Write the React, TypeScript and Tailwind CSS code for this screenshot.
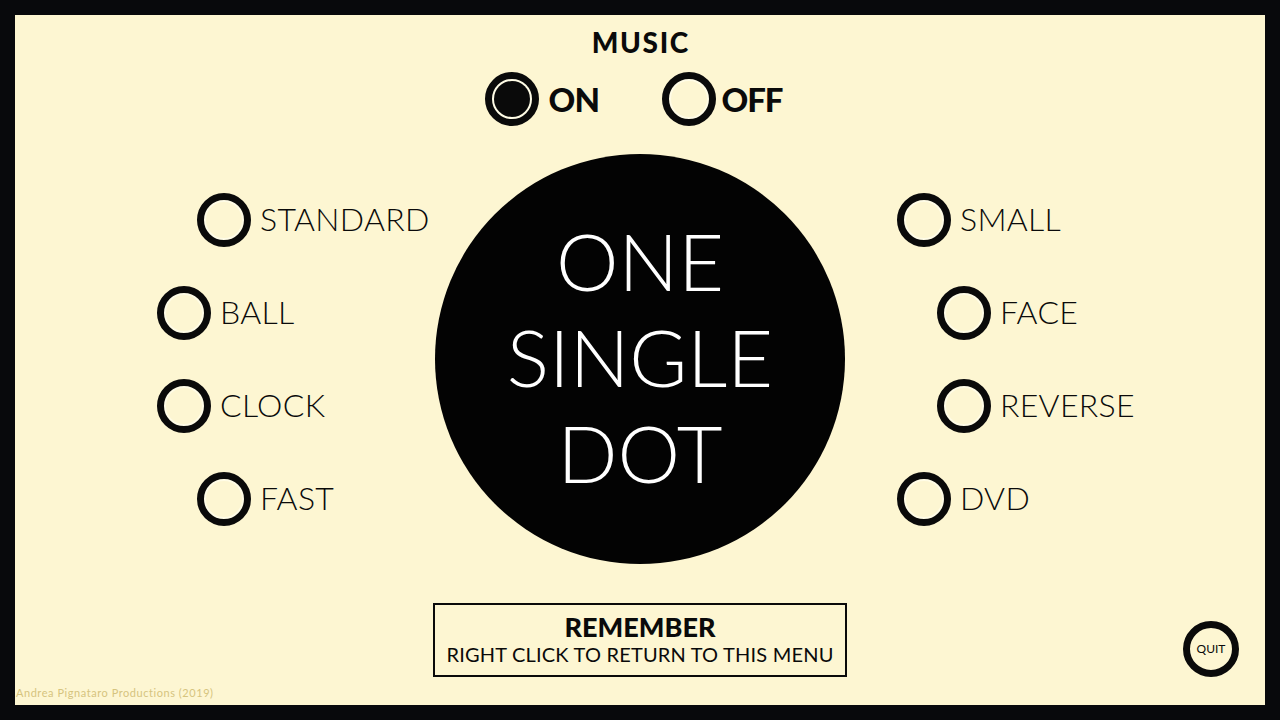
import React from "react";

const font = { fontFamily: "Lato, 'Noto Sans', sans-serif" };

function Ring({ selected = false }: { selected?: boolean }) {
  return (
    <div className="w-[54px] h-[54px] shrink-0 rounded-full border-[7px] border-[#0a0a0a] p-[2px] bg-[#fffce6]">
      {selected ? (
        <div className="w-full h-full rounded-full bg-[#0a0a0a]" />
      ) : (
        <div className="w-full h-full rounded-full bg-[#fdf6d2]" />
      )}
    </div>
  );
}

function Option({ label, indent }: { label: string; indent: string }) {
  return (
    <div className={`flex items-center gap-[9px] h-[54px] ${indent}`}>
      <Ring />
      <span className="text-[32px] leading-none text-[#0a0a0a] font-light tracking-[0.01em] -mt-[2px]">{label}</span>
    </div>
  );
}

export default function App() {
  return (
    <div className="w-[1280px] h-[720px] bg-[#08090c] p-[15px]" style={font}>
      <div className="w-full h-full bg-[#fdf6d2] flex flex-col">
        {/* MUSIC */}
        <div className="flex justify-center pt-[13px]">
          <span className="text-[28px] leading-[28px] font-black tracking-[0.06em] pl-[0.06em] text-[#0a0a0a]">MUSIC</span>
        </div>
        <div className="flex justify-center items-center mt-[16px] h-[54px] pr-[12px]">
          <div className="flex items-center gap-[9px]">
            <Ring selected />
            <span className="text-[33px] leading-none font-black tracking-[-0.02em] text-[#0a0a0a]">ON</span>
          </div>
          <div className="flex items-center gap-[5px] ml-[63px]">
            <Ring />
            <span className="text-[33px] leading-none font-black tracking-[-0.03em] text-[#0a0a0a]">OFF</span>
          </div>
        </div>

        {/* middle */}
        <div className="grid grid-cols-[420px_410px_420px] mt-[28px] h-[410px]">
          <div className="flex flex-col justify-center gap-[39px]">
            <Option label="STANDARD" indent="pl-[182px]" />
            <Option label="BALL" indent="pl-[142px]" />
            <Option label="CLOCK" indent="pl-[142px]" />
            <Option label="FAST" indent="pl-[182px]" />
          </div>
          <div className="w-[410px] h-[410px] rounded-full bg-[#030303] flex flex-col items-center justify-center text-white pb-[4px]">
            <span className="text-[79px] leading-[96px] font-light">ONE</span>
            <span className="text-[79px] leading-[96px] font-light">SINGLE</span>
            <span className="text-[79px] leading-[96px] font-light">DOT</span>
          </div>
          <div className="flex flex-col justify-center gap-[39px]">
            <Option label="SMALL" indent="pl-[52px]" />
            <Option label="FACE" indent="pl-[92px]" />
            <Option label="REVERSE" indent="pl-[92px]" />
            <Option label="DVD" indent="pl-[52px]" />
          </div>
        </div>

        {/* bottom */}
        <div className="grid grid-cols-[418px_414px_418px] mt-[39px] items-end">
          <div />
          <div className="h-[74px] border-2 border-[#0a0a0a] flex flex-col items-center justify-center text-[#0a0a0a]">
            <span className="text-[27px] leading-[28px] font-black">REMEMBER</span>
            <span className="text-[20px] leading-[26px] font-normal tracking-[0.01em]">RIGHT CLICK TO RETURN TO THIS MENU</span>
          </div>
          <div className="flex justify-end pr-[26px]">
            <div className="w-[56px] h-[56px] rounded-full border-[7px] border-[#0a0a0a] flex items-center justify-center">
              <span className="text-[12px] leading-none text-[#0a0a0a]">QUIT</span>
            </div>
          </div>
        </div>

        <div className="mt-auto pl-[1px] pb-[2px]">
          <span className="text-[11px] leading-[13px] text-[#d6c47e] tracking-[0.05em]">Andrea Pignataro Productions (2019)</span>
        </div>
      </div>
    </div>
  );
}
